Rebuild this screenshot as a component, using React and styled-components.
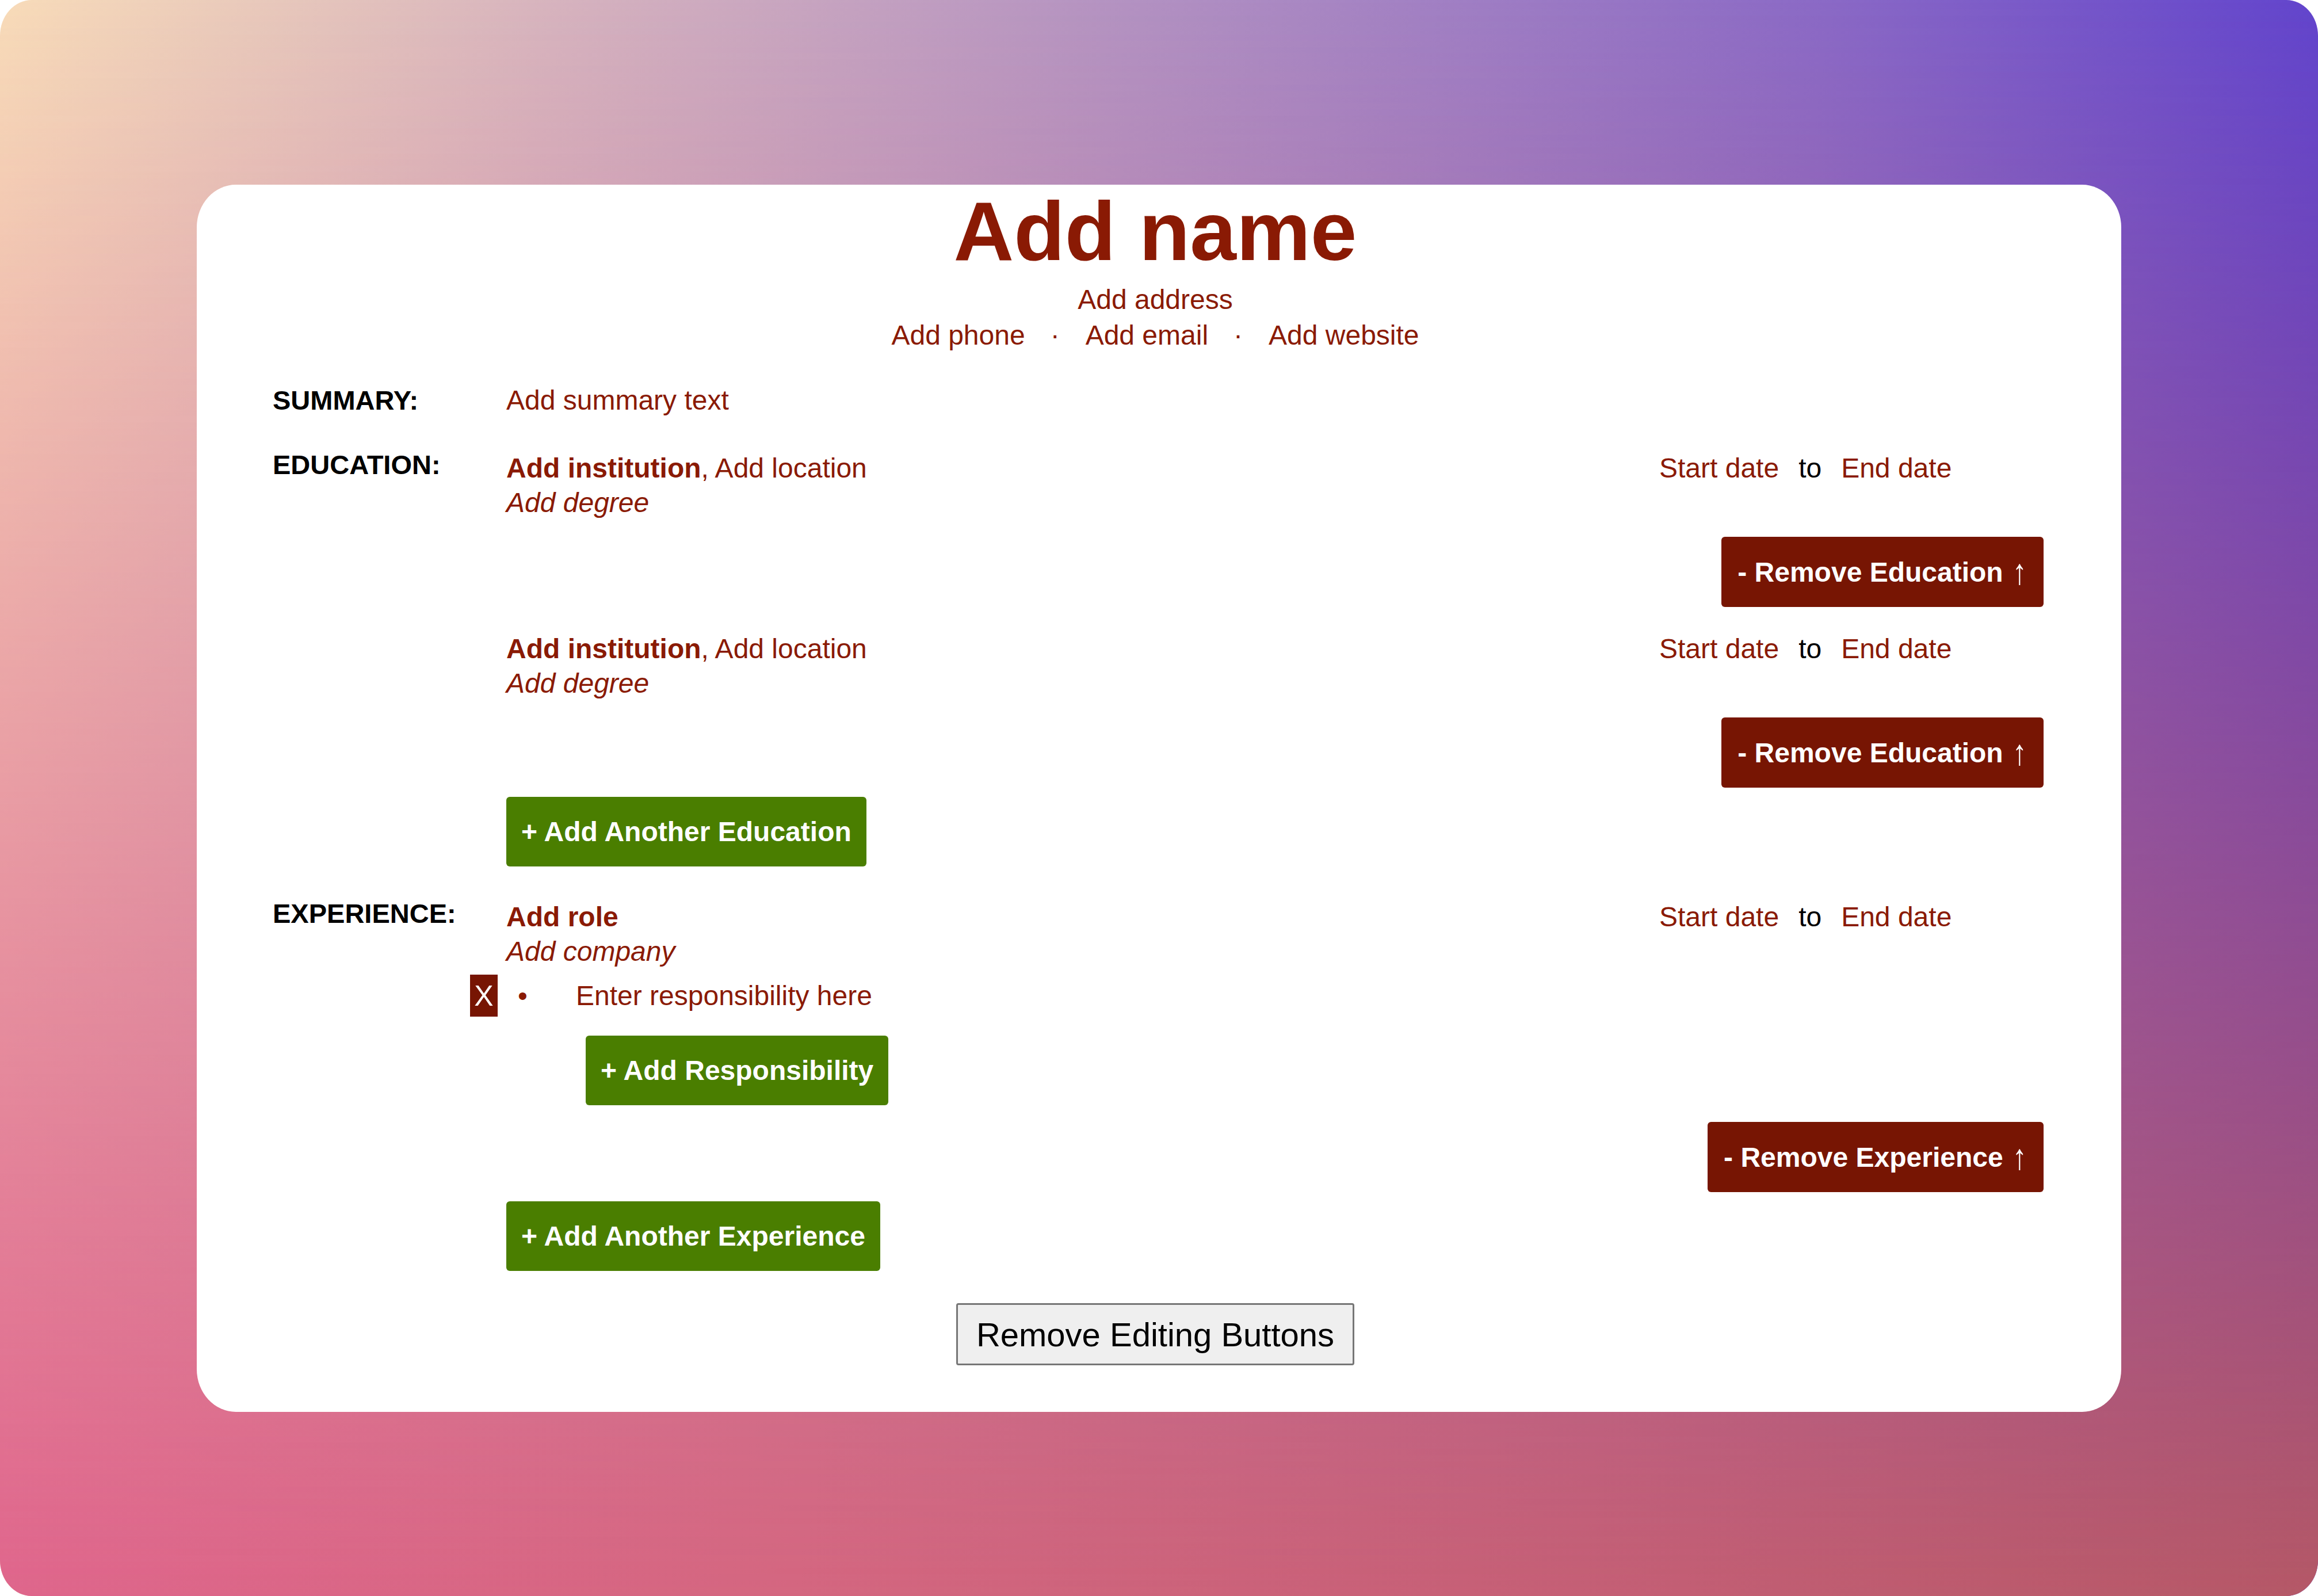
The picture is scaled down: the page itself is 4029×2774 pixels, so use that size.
import styled, { createGlobalStyle } from "styled-components";

const GlobalStyle = createGlobalStyle`
  html, body {
    margin: 0;
    padding: 0;
    background: #ffffff;
  }
  body {
    font-family: "Liberation Sans", Arial, sans-serif;
  }
  * {
    box-sizing: border-box;
  }
`;

const DARK_RED = "#8a1a04";

const educationList = [
  { institution: "Add institution", location: "Add location", degree: "Add degree" },
  { institution: "Add institution", location: "Add location", degree: "Add degree" },
];

const DateRange = () => (
  <Dates>
    <span>Start date</span>
    <To>to</To>
    <span>End date</span>
  </Dates>
);

const App = () => {
  return (
    <>
      <GlobalStyle />
      <Page>
        <Card>
          <Header>
            <Name>Add name</Name>
            <Address>Add address</Address>
            <Contacts>
              <span>Add phone</span>
              <Separator>·</Separator>
              <span>Add email</span>
              <Separator>·</Separator>
              <span>Add website</span>
            </Contacts>
          </Header>

          <Section>
            <Label>SUMMARY:</Label>
            <Text>Add summary text</Text>
          </Section>

          <Section>
            <Label>EDUCATION:</Label>
            <div>
              {educationList.map((item, i) => (
                <Entry key={i}>
                  <EntryMain>
                    <div>
                      <Text>
                        <Strong>{item.institution}</Strong>, {item.location}
                      </Text>
                      <Italic>{item.degree}</Italic>
                    </div>
                    <DateRange />
                  </EntryMain>
                  <RemoveButton>
                    - Remove Education <Arrow>↑</Arrow>
                  </RemoveButton>
                </Entry>
              ))}
              <AddButton>+ Add Another Education</AddButton>
            </div>
          </Section>

          <Section>
            <Label>EXPERIENCE:</Label>
            <div>
              <Entry>
                <EntryMain>
                  <div>
                    <Text>
                      <Strong>Add role</Strong>
                    </Text>
                    <Italic>Add company</Italic>
                    <RespRow>
                      <XButton>X</XButton>
                      <Bullet>•</Bullet>
                      <Text>Enter responsibility here</Text>
                    </RespRow>
                    <AddButton indent>+ Add Responsibility</AddButton>
                  </div>
                  <DateRange />
                </EntryMain>
                <RemoveButton>
                  - Remove Experience <Arrow>↑</Arrow>
                </RemoveButton>
              </Entry>
              <AddButton>+ Add Another Experience</AddButton>
            </div>
          </Section>

          <Footer>
            <PlainButton>Remove Editing Buttons</PlainButton>
          </Footer>
        </Card>
      </Page>
    </>
  );
};

export default App;

const Page = styled.div`
  position: relative;
  width: 4029px;
  height: 2774px;
  padding: 321px 342px 0;
  border-radius: 55px / 62px;
  overflow: hidden;
  background: linear-gradient(98deg, #f8dcb9 0%, #d6b3be 22%, #b291c2 45%, #8a69c6 72%, #5034d0 100%);

  &::before {
    content: "";
    position: absolute;
    inset: 0;
    background: linear-gradient(98deg, #e2658f 0%, #d4667f 40%, #c35e73 75%, #b55866 100%);
    -webkit-mask-image: linear-gradient(to bottom, transparent 0%, black 100%);
    mask-image: linear-gradient(to bottom, transparent 0%, black 100%);
  }
`;

const Card = styled.div`
  position: relative;
  z-index: 1;
  display: flex;
  flex-direction: column;
  background: #ffffff;
  border-radius: 68px / 74px;
  padding: 9px 135px 81px 132px;
  color: ${DARK_RED};
`;

const Header = styled.header`
  display: flex;
  flex-direction: column;
  align-items: center;
  padding-right: 10px;
`;

const Name = styled.h1`
  margin: 0;
  font-size: 145px;
  line-height: 145px;
  font-weight: bold;
  color: ${DARK_RED};
`;

const Address = styled.div`
  margin-top: 15px;
  font-size: 48px;
  line-height: 62px;
`;

const Contacts = styled.div`
  display: flex;
  font-size: 48px;
  line-height: 62px;
`;

const Separator = styled.span`
  margin: 0 45px 0 44px;
`;

const Section = styled.section`
  display: grid;
  grid-template-columns: 406px 1fr;
  margin-top: 52px;
`;

const Label = styled.div`
  font-size: 47px;
  line-height: 60px;
  font-weight: bold;
  color: #000000;
`;

const Text = styled.div`
  font-size: 48px;
  line-height: 60px;
  color: ${DARK_RED};
`;

const Strong = styled.span`
  font-weight: bold;
`;

const Italic = styled(Text)`
  font-style: italic;
`;

const Entry = styled.div`
  display: flex;
  flex-direction: column;
  padding-top: 6px;

  & + & {
    margin-top: 37px;
  }
`;

const EntryMain = styled.div`
  display: grid;
  grid-template-columns: 1fr 668px;
  align-items: start;
`;

const Dates = styled.div`
  display: flex;
  gap: 34px;
  font-size: 48px;
  line-height: 60px;
  color: ${DARK_RED};
`;

const To = styled.span`
  color: #000000;
`;

const BaseButton = styled.button`
  display: inline-flex;
  align-items: center;
  justify-content: center;
  border: none;
  border-radius: 6px;
  font-family: "Liberation Sans", Arial, sans-serif;
  font-size: 48px;
  font-weight: bold;
  color: #ffffff;
  white-space: pre;
  cursor: pointer;
`;

const RemoveButton = styled(BaseButton)`
  align-self: flex-end;
  margin-top: 29px;
  height: 122px;
  padding: 0 26px 0 28px;
  background: #771503;
`;

const Arrow = styled.span`
  font-size: 62px;
  line-height: 48px;
  font-weight: normal;
  transform: scaleX(0.8);
`;

const AddButton = styled(BaseButton)`
  display: flex;
  width: fit-content;
  margin-top: ${(p) => (p.indent ? "33px" : "16px")};
  margin-left: ${(p) => (p.indent ? "138px" : "0")};
  height: 121px;
  padding: 0 26px;
  background: #4a7e00;
`;

const RespRow = styled.div`
  display: flex;
  align-items: center;
  margin-top: 10px;
  margin-left: -63px;
`;

const XButton = styled.button`
  width: 48px;
  height: 73px;
  padding: 0;
  border: none;
  background: #771503;
  color: #ffffff;
  font-family: "Liberation Sans", Arial, sans-serif;
  font-size: 50px;
  cursor: pointer;
`;

const Bullet = styled.span`
  width: 101px;
  margin-left: 35px;
  font-size: 48px;
  line-height: 60px;
  color: ${DARK_RED};
`;

const Footer = styled.footer`
  display: flex;
  justify-content: center;
  margin-top: 56px;
  padding-right: 10px;
`;

const PlainButton = styled.button`
  height: 108px;
  padding: 0 32px;
  background: #efefef;
  border: 3px solid #767676;
  border-radius: 4px;
  font-family: "Liberation Sans", Arial, sans-serif;
  font-size: 58px;
  color: #000000;
  cursor: pointer;
`;
